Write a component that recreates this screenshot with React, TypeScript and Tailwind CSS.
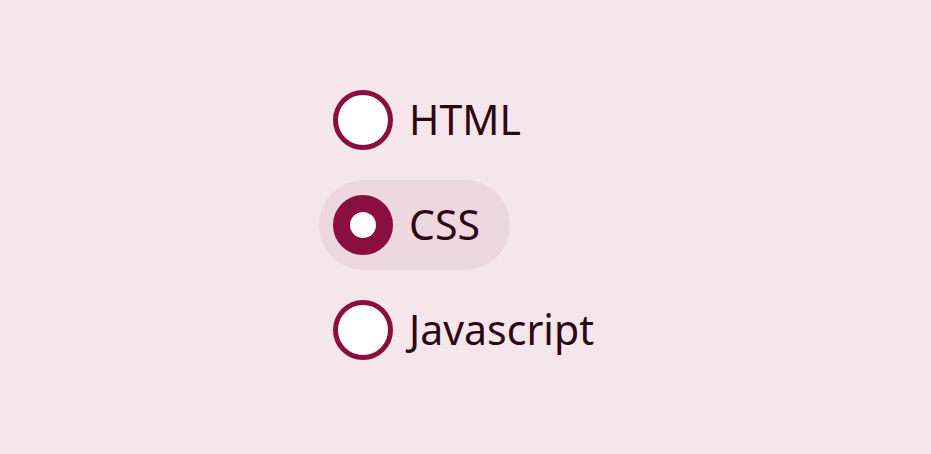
import { useState } from 'react';

const options = ['HTML', 'CSS', 'Javascript'];

export default function App() {
  const [selected, setSelected] = useState('CSS');

  return (
    <div
      className="flex h-screen w-full items-center justify-center bg-[#f4e6eb] pb-[5px] pl-[12px]"
      style={{ fontFamily: '"Noto Sans", "Open Sans", sans-serif' }}
    >
      <div className="flex flex-col items-start gap-[15px]">
        {options.map((opt) => {
          const checked = selected === opt;
          return (
            <label
              key={opt}
              onClick={() => setSelected(opt)}
              className={`flex cursor-pointer items-center gap-[16px] rounded-full py-[15px] pl-[14px] pr-[30px] ${
                checked ? 'bg-[#eed8df]' : ''
              }`}
            >
              <span
                className={`flex h-[60px] w-[60px] items-center justify-center rounded-full border-[5px] border-[#8a0e3e] ${
                  checked ? 'bg-[#8a0e3e]' : 'bg-white'
                }`}
              >
                {checked && <span className="h-[26px] w-[26px] rounded-full bg-white" />}
              </span>
              <span className="text-[41px] leading-none text-[#2e0716]">{opt}</span>
            </label>
          );
        })}
      </div>
    </div>
  );
}
